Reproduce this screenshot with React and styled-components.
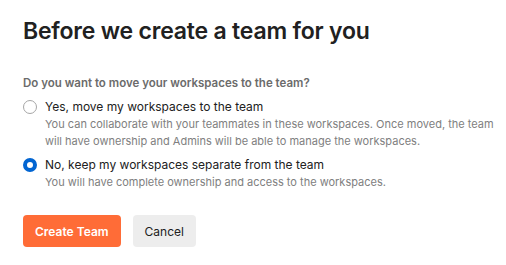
import React, { useState } from 'react';
import styled, { createGlobalStyle } from 'styled-components';

const GlobalStyle = createGlobalStyle`
  body {
    margin: 0;
    background: #ffffff;
    font-family: Inter, "Noto Sans", sans-serif;
    color: #212121;
  }
`;

const Page = styled.div`
  padding: 16px 8px 16px 23px;
`;

const Title = styled.h1`
  margin: 0;
  font-size: 23px;
  line-height: 30px;
  font-weight: 600;
  color: #212121;
  letter-spacing: -0.2px;
`;

const Question = styled.p`
  margin: 29px 0 7px;
  font-size: 11.5px;
  line-height: 16px;
  font-weight: 600;
  color: #6b6b6b;
`;

const OptionList = styled.div`
  display: flex;
  flex-direction: column;
  gap: 6px;
`;

const Option = styled.label`
  display: grid;
  grid-template-columns: 14px 1fr;
  column-gap: 8px;
  cursor: pointer;
`;

const Radio = styled.span`
  width: 14px;
  height: 14px;
  box-sizing: border-box;
  border-radius: 50%;
  margin-top: 2px;
  border: ${({ $checked }) => ($checked ? '4px solid #0265d2' : '1px solid #a6a6a6')};
  background: #ffffff;
`;

const OptionText = styled.div`
  display: flex;
  flex-direction: column;
`;

const OptionLabel = styled.span`
  font-size: 12px;
  line-height: 18px;
  color: #212121;
`;

const OptionHint = styled.span`
  font-size: 11px;
  line-height: 17px;
  color: #808080;
`;

const Actions = styled.div`
  display: flex;
  gap: 12px;
  margin-top: 24px;
`;

const Button = styled.button`
  height: 32px;
  padding: 0 12px;
  border: none;
  border-radius: 4px;
  font-family: inherit;
  font-size: 12px;
  font-weight: ${({ $primary }) => ($primary ? 600 : 400)};
  background: ${({ $primary }) => ($primary ? '#ff6c37' : '#ededed')};
  color: ${({ $primary }) => ($primary ? '#ffffff' : '#212121')};
  cursor: pointer;
`;

const options = [
  {
    id: 'move',
    label: 'Yes, move my workspaces to the team',
    hint: 'You can collaborate with your teammates in these workspaces. Once moved, the team will have ownership and Admins will be able to manage the workspaces.',
  },
  {
    id: 'keep',
    label: 'No, keep my workspaces separate from the team',
    hint: 'You will have complete ownership and access to the workspaces.',
  },
];

export default function App() {
  const [choice, setChoice] = useState('keep');
  return (
    <>
      <GlobalStyle />
      <Page>
        <Title>Before we create a team for you</Title>
        <Question>Do you want to move your workspaces to the team?</Question>
        <OptionList>
          {options.map((o) => (
            <Option key={o.id} onClick={() => setChoice(o.id)}>
              <Radio $checked={choice === o.id} />
              <OptionText>
                <OptionLabel>{o.label}</OptionLabel>
                <OptionHint>{o.hint}</OptionHint>
              </OptionText>
            </Option>
          ))}
        </OptionList>
        <Actions>
          <Button $primary>Create Team</Button>
          <Button>Cancel</Button>
        </Actions>
      </Page>
    </>
  );
}
